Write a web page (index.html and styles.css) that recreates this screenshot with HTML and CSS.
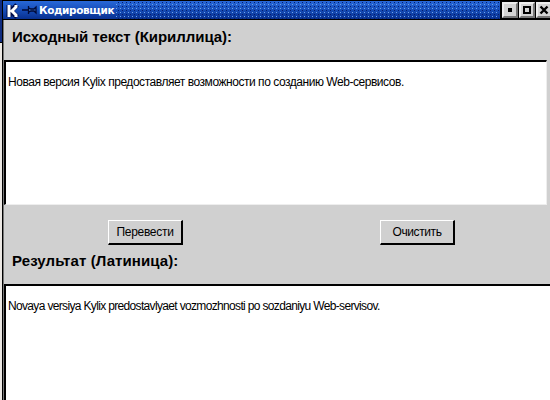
FILE: index.html
```html
<!DOCTYPE html>
<html lang="ru">
<head>
<meta charset="utf-8">
<title>Кодировщик</title>
<link rel="stylesheet" href="styles.css">
</head>
<body>
<div class="desktop">
<main class="window">
  <header class="titlebar">
    <svg class="logo" width="14" height="17" viewBox="0 0 14 17"><path d="M3 3v12M11 3L5 9L11 15" fill="none" stroke="#000c48" stroke-width="5"/><path d="M3 3v12M10 3v2L6 9L10 13v2" fill="none" stroke="#fff" stroke-width="3"/></svg>
    <svg class="pin" width="15" height="10" viewBox="0 0 15 10"><path d="M0 5h6M6.5 1v8M7 3l2 1h3l2-2v6l-2-2H9L7 7" fill="#3568b4" stroke="#000a38" stroke-width="1.3"/></svg>
    <h1 class="caption">Кодировщик</h1>
    <div class="grip"></div>
    <div class="controls">
      <button class="ctl" aria-label="Свернуть"><svg width="12" height="12"><path d="M4 4h4v4H4z"/></svg></button>
      <button class="ctl" aria-label="Развернуть"><svg width="12" height="12"><path d="M3 3h6v6H3z" fill="none" stroke="#000" stroke-width="2"/></svg></button>
      <button class="ctl" aria-label="Закрыть"><svg width="12" height="12"><path d="M2.5 2.5l7 7M9.5 2.5l-7 7" stroke="#000" stroke-width="2.4"/></svg></button>
    </div>
  </header>
  <section class="form">
    <h2 class="label source">Исходный текст (Кириллица):</h2>
    <div class="memo top"><p class="cyr">Новая версия Kylix предоставляет возможности по созданию Web-сервисов.</p></div>
    <div class="actions">
      <button class="btn">Перевести</button>
      <button class="btn clear">Очистить</button>
    </div>
    <h2 class="label result">Результат (Латиница):</h2>
    <div class="memo bottom"><p class="lat">Novaya versiya Kylix predostavlyaet vozmozhnosti po sozdaniyu Web-servisov.</p></div>
  </section>
</main>
</div>
</body>
</html>
```
FILE: styles.css
```css
* { box-sizing: border-box; }
body { margin: 0; width: 550px; height: 400px; overflow: hidden; font-family: "Liberation Sans", sans-serif; color: #000; }
h1, h2, p { margin: 0; white-space: nowrap; }
.desktop { height: 400px; padding-left: 2px; background: linear-gradient(#102c80 0 42px, #000 42px 43px, #ece8e4 43px); }
.window { height: 400px; border-left: 1px solid #000; background: #d0d0d0; display: flex; flex-direction: column; overflow: hidden; }
.titlebar { height: 20px; flex: none; display: flex; align-items: center; border-top: 1px solid #000; border-bottom: 1px solid #000; background: linear-gradient(#2868d8, #1850bc 45%, #083090); }
.logo { margin-left: 3px; margin-top: 1px; }
.pin { margin-left: 2px; }
.caption { margin-left: 2px; width: 76px; font: bold 10.5px/16px "DejaVu Sans", sans-serif; letter-spacing: -0.39px; color: #fff; }
.grip { flex: 1; height: 18px; background: radial-gradient(circle at 1.5px 1.5px, #70a4ec 0.5px, transparent 0.9px) 0 2px / 4px 4px, radial-gradient(circle at 3.5px 3.5px, #041c6c 0.5px, transparent 0.9px) 0 2px / 4px 4px; }
.controls { display: flex; width: 50px; height: 18px; flex: none; border-left: 1px solid #000; padding: 1px; gap: 1px; background: #000; }
.ctl { width: 16px; height: 16px; flex: none; padding: 0; border: 2px solid #888; border-color: #eee #777 #777 #eee; background: #d4d4d4; display: flex; align-items: center; justify-content: center; }
.form { flex: 1; display: flex; flex-direction: column; border-left: 1px solid #777; }
.label { font-size: 15px; line-height: 18px; padding-left: 8px; }
.source { margin-top: 8px; letter-spacing: -0.05px; }
.memo { background: #fff; border-top: 2px solid #000; border-left: 2px solid #000; padding: 12px 0 0 2px; font-size: 12px; line-height: 16px; }
.cyr { letter-spacing: -0.46px; }
.lat { letter-spacing: -0.66px; }
.top { margin-top: 14px; width: 543px; height: 145px; border-right: 1px solid #eee; border-bottom: 1px solid #eee; }
.actions { display: flex; gap: 197px; margin: 15px 0 0 104px; }
.btn { width: 75px; height: 25px; padding: 0; font: 12px "Liberation Sans", sans-serif; letter-spacing: -0.3px; color: #000; background: #d0d0d0; border: 1px solid #fff; border-right: 2px solid #000; border-bottom: 2px solid #000; }
.clear { letter-spacing: -0.4px; }
.result { margin-top: 7px; letter-spacing: 0.08px; }
.bottom { margin-top: 14px; flex: 1; }
```
